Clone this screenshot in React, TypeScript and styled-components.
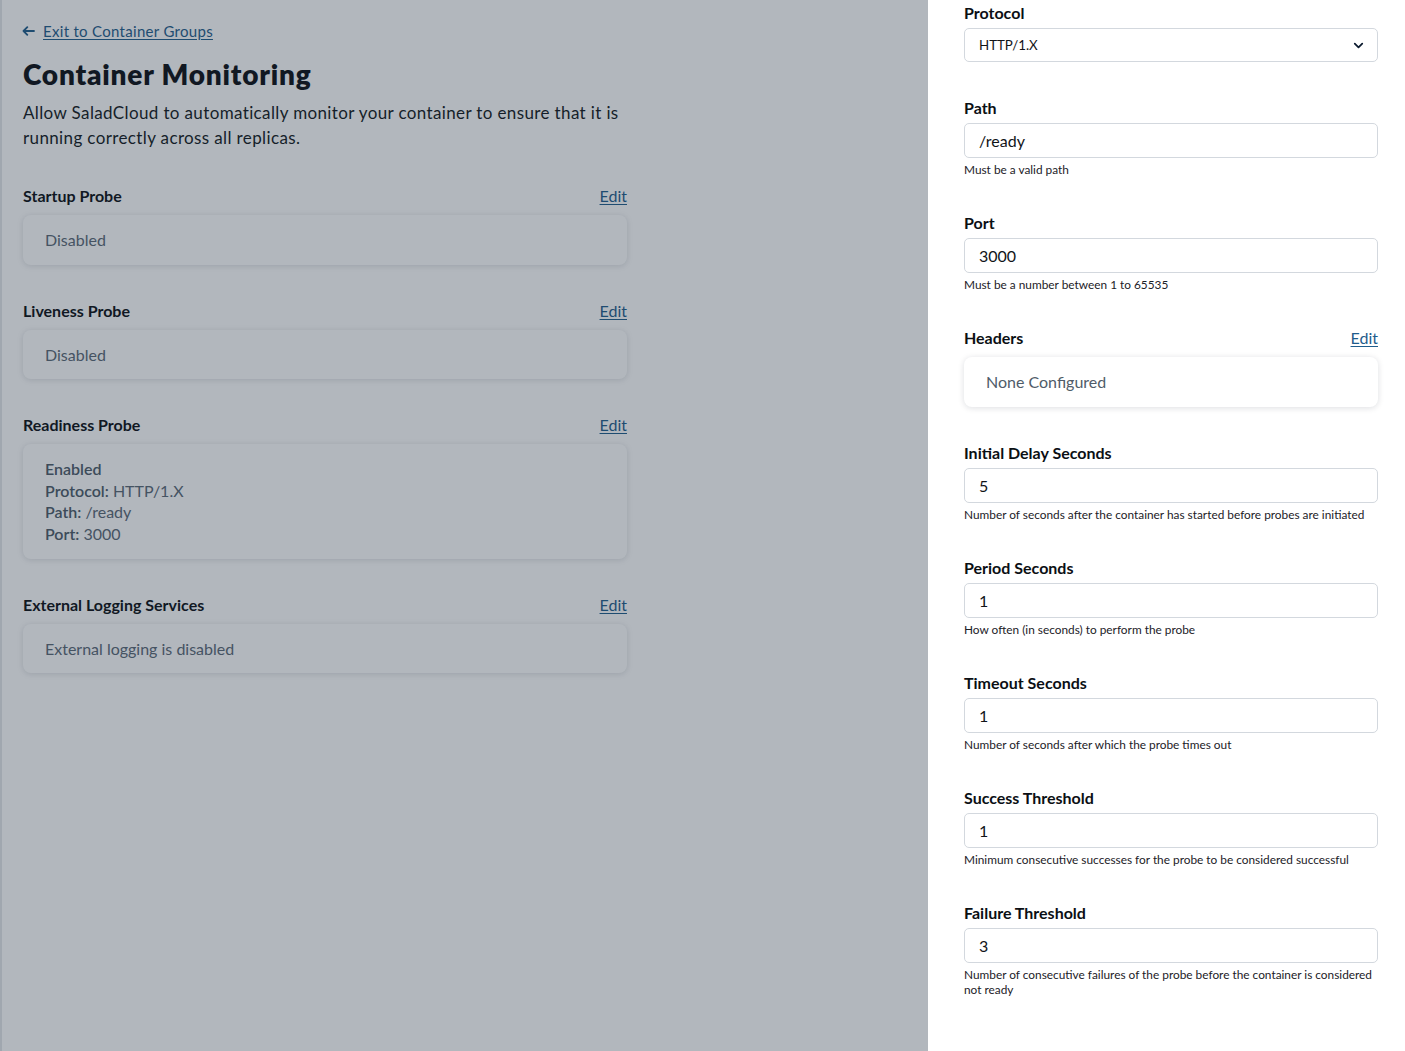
import React from "react";
import styled, { createGlobalStyle } from "styled-components";
import { ChevronDown } from "lucide-react";

const GlobalStyle = createGlobalStyle`
  html, body { margin: 0; padding: 0; }
  body {
    font-family: Lato, "Noto Sans", sans-serif;
    background: #ffffff;
    color: #0b0f14;
    overflow: hidden;
  }
  * { box-sizing: border-box; }
`;

const Page = styled.main`
  min-height: 100vh;
  border-left: 2px solid #e4e7ea;
  padding: 21px 0 40px 21px;
`;

const Content = styled.div`
  width: 604px;
  display: flex;
  flex-direction: column;
`;

const BackLink = styled.a`
  display: inline-flex;
  align-items: center;
  gap: 8px;
  height: 20px;
  margin-left: -1px;
  font-size: 15px;
  letter-spacing: 0.3px;
  color: #1f5d8c;
  text-decoration: underline;
  text-underline-offset: 2px;
  align-self: flex-start;
  cursor: pointer;
`;

const Arrow = styled.svg`
  width: 13px;
  height: 10px;
  flex: none;
`;

const Title = styled.h1`
  margin: 15px 0 0;
  font-size: 28px;
  line-height: 36px;
  font-weight: 800;
  color: #0b0f14;
  letter-spacing: 0.8px;
`;

const Description = styled.p`
  margin: 8px 0 0;
  font-size: 17px;
  line-height: 25px;
  letter-spacing: 0.37px;
  color: #121820;
`;

const Sections = styled.div`
  margin-top: 36px;
  display: flex;
  flex-direction: column;
  gap: 36px;
`;

const Section = styled.section`
  display: flex;
  flex-direction: column;
  gap: 9px;
`;

const HeaderRow = styled.div`
  display: flex;
  align-items: center;
  justify-content: space-between;
  height: 20px;
`;

const SectionLabel = styled.h3`
  margin: 0;
  font-size: 16px;
  line-height: 20px;
  font-weight: 700;
  color: #0b0f14;
`;

const EditLink = styled.a`
  font-size: 16px;
  line-height: 20px;
  color: #1f5d8c;
  text-decoration: underline;
  text-underline-offset: 2px;
  cursor: pointer;
`;

const Card = styled.div`
  background: #ffffff;
  border-radius: 8px;
  box-shadow: 0 1px 6px rgba(15, 23, 42, 0.14);
  padding: 14px 22px;
  font-size: 16px;
  line-height: 21.6px;
  color: #5a6876;
`;

const Strong = styled.span`
  font-weight: 600;
  color: #4d5b69;
`;

const Overlay = styled.div`
  position: fixed;
  inset: 0;
  background: rgba(30, 45, 62, 0.34);
`;

const Drawer = styled.aside`
  position: fixed;
  top: 0;
  right: 0;
  bottom: 0;
  width: 477px;
  background: #ffffff;
  padding: 3px 27px 0 36px;
  display: flex;
  flex-direction: column;
  gap: 36px;
  overflow: hidden;
`;

const Field = styled.div`
  display: flex;
  flex-direction: column;
`;

const FieldLabel = styled.label`
  font-size: 16px;
  line-height: 20px;
  font-weight: 700;
  color: #0b0f14;
`;

const Control = styled.div<{ $h?: number }>`
  margin-top: 5px;
  height: ${(p) => p.$h ?? 35}px;
  border: 1px solid #d3d8de;
  border-radius: 5px;
  display: flex;
  align-items: center;
  justify-content: space-between;
  padding: 0 11px 0 14px;
  color: #111418;
`;

const InputText = styled.span<{ $size?: number }>`
  font-size: ${(p) => p.$size ?? 16}px;
`;

const Helper = styled.div`
  margin-top: 4px;
  font-size: 11.85px;
  line-height: 15px;
  color: #1c2127;
`;

const DrawerCard = styled(Card)`
  color: #4f5c69;
`;

const probes = [
  { label: "Startup Probe", body: "Disabled" },
  { label: "Liveness Probe", body: "Disabled" },
];

const fields = [
  { label: "Path", value: "/ready", help: "Must be a valid path" },
  { label: "Port", value: "3000", help: "Must be a number between 1 to 65535" },
];

const numberFields = [
  {
    label: "Initial Delay Seconds",
    value: "5",
    help: "Number of seconds after the container has started before probes are initiated",
  },
  { label: "Period Seconds", value: "1", help: "How often (in seconds) to perform the probe" },
  { label: "Timeout Seconds", value: "1", help: "Number of seconds after which the probe times out" },
  {
    label: "Success Threshold",
    value: "1",
    help: "Minimum consecutive successes for the probe to be considered successful",
  },
  {
    label: "Failure Threshold",
    value: "3",
    help: "Number of consecutive failures of the probe before the container is considered not ready",
  },
];

export default function App() {
  return (
    <>
      <GlobalStyle />
      <Page>
        <Content>
          <BackLink>
            <Arrow viewBox="0 0 13 10" fill="none" stroke="currentColor" strokeWidth={1.8} strokeLinecap="round" strokeLinejoin="round">
              <path d="M12 5H1.5M5.3 1.2L1.5 5l3.8 3.8" />
            </Arrow>
            Exit to Container Groups
          </BackLink>
          <Title>Container Monitoring</Title>
          <Description>
            Allow SaladCloud to automatically monitor your container to ensure that it is running
            correctly across all replicas.
          </Description>
          <Sections>
            {probes.map((p) => (
              <Section key={p.label}>
                <HeaderRow>
                  <SectionLabel>{p.label}</SectionLabel>
                  <EditLink>Edit</EditLink>
                </HeaderRow>
                <Card>{p.body}</Card>
              </Section>
            ))}
            <Section>
              <HeaderRow>
                <SectionLabel>Readiness Probe</SectionLabel>
                <EditLink>Edit</EditLink>
              </HeaderRow>
              <Card>
                <div>
                  <Strong>Enabled</Strong>
                </div>
                <div>
                  <Strong>Protocol:</Strong> HTTP/1.X
                </div>
                <div>
                  <Strong>Path:</Strong> /ready
                </div>
                <div>
                  <Strong>Port:</Strong> 3000
                </div>
              </Card>
            </Section>
            <Section>
              <HeaderRow>
                <SectionLabel>External Logging Services</SectionLabel>
                <EditLink>Edit</EditLink>
              </HeaderRow>
              <Card>External logging is disabled</Card>
            </Section>
          </Sections>
        </Content>
      </Page>
      <Overlay />
      <Drawer>
        <Field>
          <FieldLabel>Protocol</FieldLabel>
          <Control $h={34}>
            <InputText $size={13.3}>HTTP/1.X</InputText>
            <ChevronDown size={15} strokeWidth={2.8} color="#0b1a2e" />
          </Control>
        </Field>
        {fields.map((f) => (
          <Field key={f.label}>
            <FieldLabel>{f.label}</FieldLabel>
            <Control>
              <InputText>{f.value}</InputText>
            </Control>
            <Helper>{f.help}</Helper>
          </Field>
        ))}
        <Section>
          <HeaderRow>
            <FieldLabel>Headers</FieldLabel>
            <EditLink>Edit</EditLink>
          </HeaderRow>
          <DrawerCard>None Configured</DrawerCard>
        </Section>
        {numberFields.map((f) => (
          <Field key={f.label}>
            <FieldLabel>{f.label}</FieldLabel>
            <Control>
              <InputText>{f.value}</InputText>
            </Control>
            <Helper>{f.help}</Helper>
          </Field>
        ))}
      </Drawer>
    </>
  );
}
